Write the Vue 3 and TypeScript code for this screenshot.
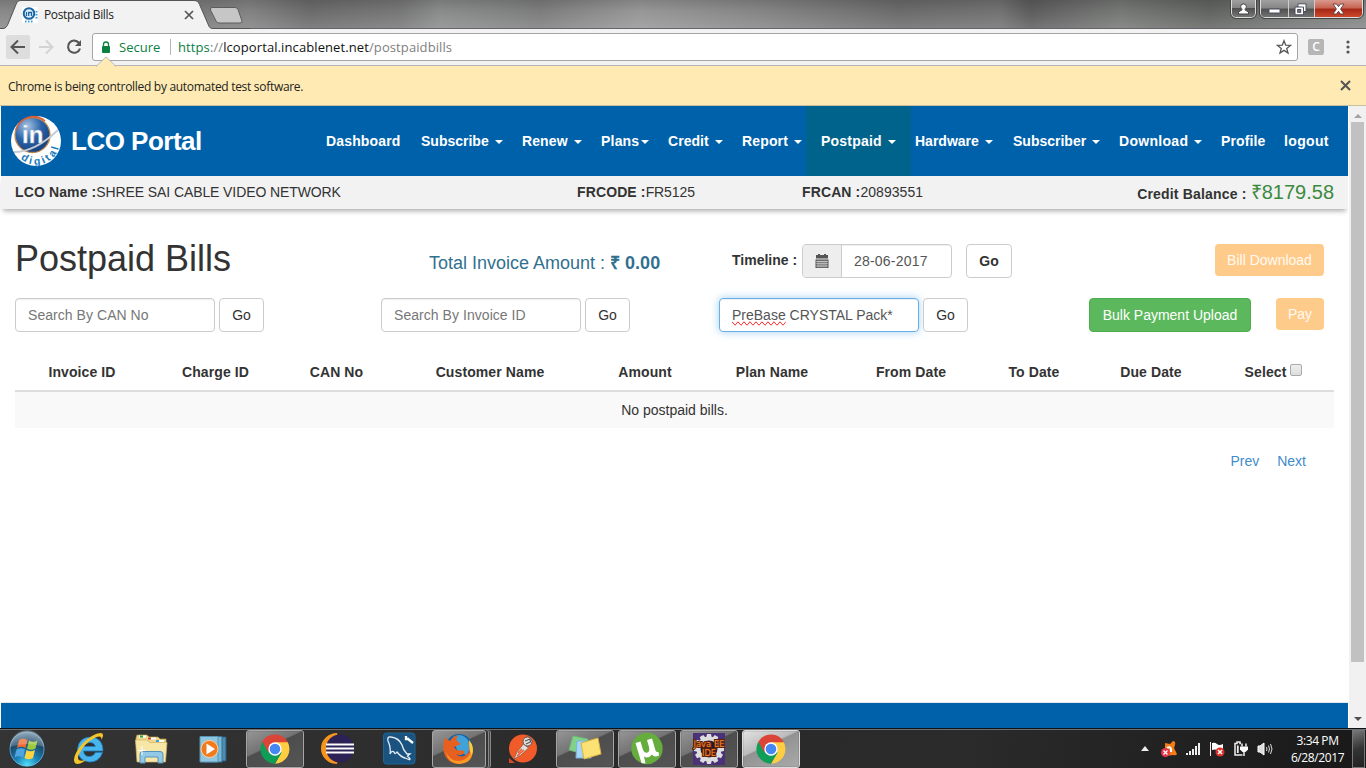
<script setup lang="ts">
interface NavItem {
  label: string
  width: number
  track: number
  caret?: boolean
  tight?: boolean
  active?: boolean
}

const navItems: NavItem[] = [
  { label: 'Dashboard', width: 95, track: 0.15 },
  { label: 'Subscribe', width: 101, track: 0, caret: true },
  { label: 'Renew', width: 79, track: 0.1, caret: true },
  { label: 'Plans', width: 67, track: 0.2, caret: true, tight: true },
  { label: 'Credit', width: 74, track: 0.05, caret: true },
  { label: 'Report', width: 64, track: 0.15, caret: true },
  { label: 'Postpaid', width: 109, track: 0.2, caret: true, active: true },
  { label: 'Hardware', width: 98, track: 0, caret: true },
  { label: 'Subscriber', width: 106, track: 0, caret: true },
  { label: 'Download', width: 102, track: 0.3, caret: true },
  { label: 'Profile', width: 63, track: 0.1 },
  { label: 'logout', width: 64, track: 0.35 },
]

const columns = [
  { label: 'Invoice ID', width: 134 },
  { label: 'Charge ID', width: 133 },
  { label: 'CAN No', width: 109 },
  { label: 'Customer Name', width: 198 },
  { label: 'Amount', width: 112 },
  { label: 'Plan Name', width: 142 },
  { label: 'From Date', width: 136 },
  { label: 'To Date', width: 110 },
  { label: 'Due Date', width: 124 },
]

const tasks = [
  { name: 'ie', state: '' },
  { name: 'explorer', state: '' },
  { name: 'media', state: '' },
  { name: 'chrome', state: 'open' },
  { name: 'eclipse', state: '' },
  { name: 'mysql', state: '' },
  { name: 'firefox', state: 'open stacked' },
  { name: 'postman', state: '' },
  { name: 'notes', state: 'open' },
  { name: 'utorrent', state: 'open' },
  { name: 'javaee', state: 'open' },
  { name: 'chrome', state: 'open current' },
]

const teeth = Array.from({ length: 12 }, (_, i) => i * 30)
</script>

<template>
  <div class="screen">
    <header class="titlebar">
      <svg class="tabs" width="250" height="29" viewBox="0 0 250 29">
        <path d="M0 28.5H3C6 28.5 7 26 8 24L16 4.500C17 2 18 .5 21 .5H194C197 .5 198.500 2 199.500 4.500L208 24C209 27 210 28.500 213 28.500H250V29H0Z" fill="#f2f2f2" />
        <path d="M0 28.500H3C6 28.500 7 26 8 24L16 4.500C17 2 18 .5 21 .5H194C197 .5 198.500 2 199.500 4.500L208 24C209 27 210 28.500 213 28.500H250" fill="none" stroke="#555" />
        <path d="M212 7.500H235Q237 7.500 238 9.500L242 21Q242.500 23 240 23H219Q217 23 216 21L210.500 10Q210 7.500 212 7.500Z" fill="#c6c6c6" stroke="#5c5c5c" />
      </svg>
      <div class="tab">
        <svg width="16" height="16" viewBox="0 0 16 16">
          <rect width="16" height="16" fill="#fff" />
          <circle cx="7" cy="6.500" r="5.300" fill="#dfeefa" stroke="#1c65a5" stroke-width="2" />
          <path d="M4.500 5V9M6.700 9V5.500H9.500V9" fill="none" stroke="#1c65a5" stroke-width="1.300" />
          <path d="M3 14.500H12M14.500 4V12" stroke="#3aa0dc" stroke-width="2" stroke-dasharray="1.500 1.500" />
        </svg>
        <span class="tab-title">Postpaid Bills</span>
        <svg class="tab-close" width="10" height="10" viewBox="0 0 10 10"><path d="M1 1L9 9M9 1L1 9" stroke="#555" stroke-width="1.700" /></svg>
      </div>
      <div class="window-controls">
        <div class="ctl profile">
          <svg width="11" height="12" viewBox="0 0 11 12"><path d="M.5 11V9L3 7.500L4.500 6.500H6.500L8 7.500L10.500 9V11Z" fill="#fff" stroke="#444" /><circle cx="5.500" cy="3.800" r="2.900" fill="#fff" stroke="#444" /><path d="M4.500 6H6.500V8H4.500Z" fill="#fff" /></svg>
        </div>
        <div class="ctl-group">
          <div class="ctl min"><svg width="13" height="6" viewBox="0 0 13 6"><rect x="1" y="1" width="11" height="4" rx=".5" fill="#fff" stroke="#4b4e60" /></svg></div>
          <div class="ctl max"><svg width="13" height="13" viewBox="0 0 13 13"><path d="M4 .8H12V8.500H9.500V11.800H1V4H4Z" fill="#fff" stroke="#4b4e60" /><rect x="3.700" y="6.500" width="3" height="2.800" fill="#777" stroke="#4b4e60" /><path d="M4 4H9.500V8.500" fill="none" stroke="#4b4e60" /></svg></div>
          <div class="ctl close"><svg width="13" height="12" viewBox="0 0 13 12"><path d="M1 1H4.500L6.500 3.700L8.500 1H12L8.600 6L12 11H8.500L6.500 8.300L4.500 11H1L4.400 6Z" fill="#fff" stroke="#5a3c40" stroke-width=".9" /></svg></div>
        </div>
      </div>
    </header>

    <div class="toolbar">
      <div class="tool back"><svg width="16" height="16" viewBox="0 0 16 16"><path d="M15 8H2M8 1.500L1.500 8L8 14.500" fill="none" stroke="#555" stroke-width="2" /></svg></div>
      <div class="tool fwd"><svg width="16" height="16" viewBox="0 0 16 16"><path d="M1 8H14M8 1.500L14.500 8L8 14.500" fill="none" stroke="#d3d3d3" stroke-width="2" /></svg></div>
      <div class="tool reload"><svg width="16" height="16" viewBox="0 0 16 16"><path d="M13.200 4.200A6.100 6.100 0 1 0 14 9.500" fill="none" stroke="#555" stroke-width="2.100" /><path d="M15 1V7H9Z" fill="#555" /></svg></div>
      <div class="address">
        <svg class="lock" width="10" height="12" viewBox="0 0 10 12"><rect x="1" y="5" width="8" height="7" rx="1" fill="#0b8043" /><path d="M2.500 5.500V3.500A2.500 2.500 0 0 1 7.500 3.500V5.500" fill="none" stroke="#0b8043" stroke-width="1.300" /></svg>
        <span class="secure">Secure</span>
        <span class="sep"></span>
        <span class="url"><span class="scheme">https</span><span class="dim">://</span>lcoportal.incablenet.net<span class="dim">/postpaidbills</span></span>
        <svg class="star" width="16" height="16" viewBox="0 0 16 16"><path d="M8 1.700L9.700 6.200L14.500 6.400L10.700 9.400L12 14L8 11.400L4 14L5.300 9.400L1.500 6.400L6.300 6.200Z" fill="none" stroke="#555" stroke-width="1.300" /></svg>
      </div>
      <div class="ext">C</div>
      <svg class="menu" width="4" height="14" viewBox="0 0 4 14"><circle cx="2" cy="2" r="1.600" fill="#555" /><circle cx="2" cy="7" r="1.600" fill="#555" /><circle cx="2" cy="12" r="1.600" fill="#555" /></svg>
    </div>

    <div class="infobar">
      <svg class="pointer" width="20" height="11" viewBox="0 0 20 11"><path d="M0 11L10 1L20 11Z" fill="#ffeab3" /><path d="M0 10.500L10 .8L20 10.500" fill="none" stroke="#b8b8b8" /></svg>
      <span class="info-text">Chrome is being controlled by automated test software.</span>
      <svg width="11" height="11" viewBox="0 0 11 11"><path d="M1 1L10 10M10 1L1 10" stroke="#555" stroke-width="2" /></svg>
    </div>

    <div class="viewport">
      <main class="page">
        <nav class="navbar">
          <svg class="logo" width="52" height="52" viewBox="0 0 52 52">
            <defs>
              <radialGradient id="globe" cx=".35" cy=".25" r=".8"><stop offset="0" stop-color="#a8c4e4" /><stop offset=".5" stop-color="#2c64aa" /><stop offset="1" stop-color="#123e7b" /></radialGradient>
              <path id="ring" d="M10 43A23.500 23.500 0 0 0 49.500 22" />
            </defs>
            <circle cx="26" cy="26" r="25" fill="#fff" />
            <circle cx="22.500" cy="20" r="17.500" fill="url(#globe)" stroke="#b9864d" stroke-width="1.300" />
            <path d="M6 15A18 18 0 0 1 35 6" fill="none" stroke="#d95b36" stroke-width="1.500" />
            <text x="12" y="28" class="logo-in">in</text>
            <path d="M4 37Q25 37 48 15" fill="none" stroke="#c4cbd3" stroke-width="1.800" />
            <text class="logo-digital"><textPath href="#ring" startOffset="1">digital</textPath></text>
          </svg>
          <span class="brand">LCO Portal</span>
          <ul class="nav">
            <li v-for="item in navItems" :key="item.label" :class="{ active: item.active, tight: item.tight }" :style="{ width: item.width + 'px' }">
              <div class="nav-link"><span :style="{ letterSpacing: item.track + 'px' }">{{ item.label }}</span><i v-if="item.caret" class="caret"></i></div>
            </li>
          </ul>
        </nav>

        <section class="account">
          <span class="acc-name"><b>LCO Name :</b>SHREE SAI CABLE VIDEO NETWORK</span>
          <span class="acc-code"><b>FRCODE :</b>FR5125</span>
          <span class="acc-can"><b>FRCAN :</b>20893551</span>
          <span class="acc-credit"><b>Credit Balance : </b><span class="balance">₹8179.58</span></span>
        </section>

        <div class="row heading-row">
          <h1>Postpaid Bills</h1>
          <div class="total">Total Invoice Amount : <b>₹ 0.00</b></div>
          <div class="timeline">
            <b>Timeline :</b>
            <div class="date-group">
              <span class="addon"><svg width="14" height="14" viewBox="0 0 14 14"><path d="M1 1H13V4.500H1ZM3 0H5V3H3ZM9 0H11V3H9Z" fill="#555" /><path d="M.5 5.500H13.500V14H.5Z" fill="#555" /><path d="M1 7.500H13M1 9.700H13M1 12H13M3 6.500V13.500M5 6.500V13.500M7 6.500V13.500M9 6.500V13.500M11 6.500V13.500" stroke="#eee" stroke-width=".6" /></svg></span>
              <span class="date">28-06-2017</span>
            </div>
            <button class="btn bold">Go</button>
          </div>
          <button class="btn warn">Bill Download</button>
        </div>

        <div class="row search-row">
          <div class="search can"><span class="field hint">Search By CAN No</span><button class="btn">Go</button></div>
          <div class="search inv"><span class="field hint">Search By Invoice ID</span><button class="btn">Go</button></div>
          <div class="search plan"><span class="field focused"><span class="misspelt">PreBase</span>&nbsp;CRYSTAL Pack*</span><button class="btn">Go</button></div>
          <button class="btn success">Bulk Payment Upload</button>
          <button class="btn warn pay">Pay</button>
        </div>

        <table>
          <colgroup><col v-for="c in columns" :key="c.label" :style="{ width: c.width + 'px' }" /><col /></colgroup>
          <thead>
            <tr>
              <th v-for="c in columns" :key="c.label">{{ c.label }}</th>
              <th><span class="select">Select<i class="check"></i></span></th>
            </tr>
          </thead>
          <tbody><tr><td colspan="10">No postpaid bills.</td></tr></tbody>
        </table>

        <div class="pager"><a>Prev</a><a>Next</a></div>
        <footer></footer>
      </main>
      <aside class="scrollbar">
        <svg width="8" height="4" viewBox="0 0 8 4"><path d="M0 4L4 0L8 4Z" fill="#a3a3a3" /></svg>
        <div class="thumb"></div>
        <svg class="down" width="8" height="4" viewBox="0 0 8 4"><path d="M0 0L4 4L8 0Z" fill="#505050" /></svg>
      </aside>
    </div>

    <div class="taskbar">
      <svg class="orb" width="40" height="38" viewBox="0 0 40 38">
        <defs>
          <radialGradient id="orb" cx=".5" cy=".95" r=".95"><stop offset="0" stop-color="#4ee4ff" /><stop offset=".35" stop-color="#1a7fb5" /><stop offset=".7" stop-color="#1d4564" /><stop offset="1" stop-color="#7d9fb5" /></radialGradient>
        </defs>
        <circle cx="20" cy="19" r="18" fill="url(#orb)" stroke="#20333f" />
        <circle cx="20" cy="19" r="17" fill="none" stroke="#8fb6cb" stroke-opacity=".7" />
        <path d="M12 10Q16 7 20.500 10L18.500 18Q14.500 15.500 10 18Z" fill="#ee6a33" />
        <path d="M22 10.500Q26 13 30.500 10.500L28.500 18.500Q24 21 20 18.500Z" fill="#9bc93c" />
        <path d="M9.500 19.500Q14 17 18 19.500L16 27.500Q12 25 7.500 27.500Z" fill="#4fa5e0" />
        <path d="M19.500 20Q23.500 22.500 28 20L26 28Q21.500 30.500 17.500 28Z" fill="#ffd23f" />
        <path d="M3 17A17 17 0 0 1 37 17Q20 11 3 17Z" fill="#fff" opacity=".22" />
      </svg>
      <div class="tasks">
        <div v-for="(t, i) in tasks" :key="i" class="task" :class="t.state">
          <svg v-if="t.name === 'ie'" width="34" height="34" viewBox="0 0 34 34">
            <path d="M30.500 20.500H23.500Q21.500 24.500 17.500 24.500Q12 24.500 11.500 19H31Q31 6.500 19.500 5Q7 5 5.500 17Q6 29 17.500 30Q27.500 30 30.500 20.500ZM11.800 14.500Q13 10.500 17.500 10.500Q22.500 10.500 23.300 14.500Z" fill="#49b5ed" stroke="#1d7fc0" stroke-width=".8" />
            <path d="M29.500 8Q33 1 28.500 1Q21 1.500 11 11Q-1 25 3 31Q6 34 14 28Q4 31 6.500 23Q12 11 23.500 5.500Q30 2.500 29.500 8Z" fill="#f5c62b" />
          </svg>
          <svg v-else-if="t.name === 'explorer'" width="34" height="34" viewBox="0 0 34 34">
            <path d="M2 6L3 3H13L15 5H24L26 7H32V12H2Z" fill="#f0d689" stroke="#b99b4b" stroke-width=".7" />
            <path d="M5 4.500H12M14 6.500H22M23 9H30" stroke="#fff" stroke-width="2" /><path d="M6 4.500H9" stroke="#1fa83a" stroke-width="2" /><path d="M14 6.500H17" stroke="#d2402c" stroke-width="2" /><path d="M22 9H25" stroke="#3ba0e0" stroke-width="2" />
            <path d="M1.500 8H13L16 10.500H33L31.500 30H3Z" fill="#f7e6a5" stroke="#cfb465" stroke-width=".7" />
            <path d="M6 31V22Q6 19.500 9 19.500H26Q29 19.500 29 22V31H24V25H11V31Z" fill="#91c9e7" stroke="#5693ba" />
            <path d="M8 14V23M4 18.500H12" stroke="#fff" stroke-width="1" />
          </svg>
          <svg v-else-if="t.name === 'media'" width="34" height="34" viewBox="0 0 34 34">
            <path d="M12 5H30V29H12Z" fill="#4c8eb3" stroke="#285b7c" /><path d="M8 4.500H26V30H8Z" fill="#7bb9d8" stroke="#376f91" /><path d="M4 4.500H22V30H4Z" fill="#91c6df" stroke="#5595b7" />
            <circle cx="13.500" cy="17" r="8.500" fill="#f07a1c" stroke="#ffd0a0" /><path d="M10.500 11.500L19 17L10.500 22.500Z" fill="#fff" />
          </svg>
          <svg v-else-if="t.name === 'chrome'" width="34" height="34" viewBox="0 0 34 34">
            <path d="M17 10H29.700A14.700 14.700 0 0 1 17 31.700L23.400 20.700Z" fill="#ffcd42" />
            <path d="M17 17L4.300 9.700A14.700 14.700 0 0 0 17 31.700L23.400 20.700Z" fill="#109d58" />
            <path d="M4.300 9.700L10.600 20.700L17 10.300H29.900A14.700 14.700 0 0 0 4.300 9.700Z" fill="#dc4437" />
            <circle cx="17" cy="17" r="6.700" fill="#fff" /><circle cx="17" cy="17" r="5.300" fill="#4587f3" />
          </svg>
          <svg v-else-if="t.name === 'eclipse'" class="eclipse" width="34" height="34" viewBox="0 0 34 34">
            <path d="M16 2A15 14.500 0 0 0 16 31A16 16 0 0 1 16 2Z" fill="#f7941e" stroke="#f7941e" stroke-width="2" />
            <circle cx="19" cy="16.500" r="14" fill="#2c2255" /><path d="M5 12.500H33M5 16.500H33M5 20.500H33" stroke="#fff" stroke-width="2" />
          </svg>
          <svg v-else-if="t.name === 'mysql'" width="34" height="34" viewBox="0 0 34 34">
            <rect x="1.500" y="1" width="31.500" height="31" rx="3" fill="#1b5380" stroke="#1d6796" />
            <path d="M8 22Q9 15 6 9Q5 4 9 5Q17 6 20 13Q21 18 25 22H28L25.500 24L28.500 27.500M8 22Q10 18 12 20Q13 23 15 20Q19 25 23 26L28 28" fill="none" stroke="#e7eef5" stroke-width="1.300" /><path d="M24 4V7H27M26 7L31 11" fill="none" stroke="#fff" stroke-width="2.300" />
          </svg>
          <svg v-else-if="t.name === 'firefox'" class="firefox" width="34" height="34" viewBox="0 0 34 34">
            <circle cx="18" cy="15.500" r="13.500" fill="#1763a5" /><path d="M12 5Q20 0 27 8Q31 17 25 23L16 18Z" fill="#3fa2d8" />
            <path d="M4 6L9 9Q11 5 17 3Q15 7 16 9L20 12L13 15Q16 20 21 18L24 20Q21 25 15 22Q21 28 28 20Q29 14 27 9Q34 15 31 23Q27 32 17 32Q6 31 3 21Q1 14 4 6Z" fill="#e8601f" />
            <path d="M5 20Q9 29 18 29Q29 28 31 15Q34 31 18 32Q7 31 5 20Z" fill="#f99a25" /><path d="M28 8Q34 15 31 23Q28 20 28 8Z" fill="#ffc93a" />
          </svg>
          <svg v-else-if="t.name === 'postman'" width="34" height="34" viewBox="0 0 34 34">
            <path d="M3 26V31H9Z" fill="#d84824" /><circle cx="17" cy="16.500" r="14" fill="#f15a29" />
            <path d="M17.500 12L22.500 16L15 23L8 27L11 20Z" fill="#e3dcd7" stroke="#7a5b4c" stroke-width=".7" /><circle cx="21.500" cy="9.500" r="4.500" fill="#ddd" stroke="#5d5350" /><path d="M19 9L24 7L24.500 10L20 12" fill="none" stroke="#5d5350" stroke-width="1.200" /><path d="M12 21L16 17M11 24L18 18" stroke="#f15a29" stroke-width="1.600" />
          </svg>
          <svg v-else-if="t.name === 'notes'" width="34" height="34" viewBox="0 0 34 34">
            <path d="M5 4L20 7L16 22L1 18Z" fill="#83d08a" stroke="#6eb875" /><path d="M9 9L24 9L23 26L8 26Z" fill="#a6d5f7" stroke="#79b6e1" /><path d="M13 11L30 6L33 22L16 27Z" fill="#fce175" stroke="#d9b33d" />
          </svg>
          <svg v-else-if="t.name === 'utorrent'" width="34" height="34" viewBox="0 0 34 34">
            <circle cx="17" cy="16.500" r="15.700" fill="#65ad3d" /><path d="M5.500 11L10.500 9.500L13 18Q14.500 21.500 17.500 20.500Q20 19.500 19 15L17 8L22 6.500L25.500 18.500Q26.300 20.500 28.500 20L29 23.500Q24 26 22 22.500Q18.500 27 14 24.500L15.500 31.500L11.500 31Z" fill="#fff" />
          </svg>
          <svg v-else width="34" height="34" viewBox="0 0 34 34">
            <rect x="1" y="1" width="32" height="32" fill="#4b3177" /><g transform="translate(17 17)"><path v-for="a in teeth" :key="a" d="M-2 -15H2L3 -10H-3Z" fill="#ddd" :transform="'rotate(' + a + ')'" /></g>
            <circle cx="17" cy="17" r="10.500" fill="#24173a" stroke="#ddd" stroke-width="4" /><text x="17" y="15" class="ee" textLength="31" lengthAdjust="spacingAndGlyphs">Java EE</text><text x="17" y="24" class="ee" textLength="14" lengthAdjust="spacingAndGlyphs">IDE</text>
          </svg>
        </div>
      </div>
      <div class="tray">
        <svg width="8" height="5" viewBox="0 0 8 5"><path d="M0 5L4 0L8 5Z" fill="#eee" /></svg>
        <svg width="16" height="16" viewBox="0 0 16 16"><path d="M4 2L9 3L12 0Q15 0 14 4L13 7L16 13Q15 15 12 14L4 15L1 12L4 7Z" fill="#f47b16" /><path d="M6 7Q9 5 10 8V11" fill="none" stroke="#fff" stroke-width="2" /><circle cx="4.500" cy="11.500" r="4.500" fill="#e6344a" /><path d="M2.500 9.500L6.500 13.500M6.500 9.500L2.500 13.500" stroke="#fff" stroke-width="1.200" /></svg>
        <svg width="15" height="12" viewBox="0 0 15 12"><path d="M1 10V12M4 8V12M7 6V12M10 3V12M13 0V12" stroke="#eee" stroke-width="2" /></svg>
        <svg width="16" height="16" viewBox="0 0 16 16"><path d="M1.500 1V15" stroke="#eee" /><path d="M3 2Q6 1 8 3T14 3V9Q10 10 8 9T3 9Z" fill="#fff" /><circle cx="11" cy="11" r="4.500" fill="#db3028" /><path d="M9 9L13 13M13 9L9 13" stroke="#fff" stroke-width="1.500" /></svg>
        <svg width="15" height="15" viewBox="0 0 15 15"><path d="M7 2.500H6V1H3V2.500H1V14H8.500" fill="none" stroke="#eee" stroke-width="1.500" /><path d="M3.800 4.500V12" stroke="#eee" stroke-width="1.800" /><path d="M6 5.500H14V8.500L11.500 11H8.500L6 8.500Z" fill="#fff" /><path d="M8 5.500V2.500M12 5.500V2.500M10 10V15" stroke="#fff" stroke-width="1.400" /></svg>
        <svg width="16" height="14" viewBox="0 0 16 14"><path d="M1 4H3L7 1V13L3 10H1Z" fill="#ddd" stroke="#fff" /><path d="M9.500 5Q10.500 7 9.500 9M11.500 3.500Q13.500 7 11.500 10.500M13.500 2Q16.500 7 13.500 12" fill="none" stroke="#ddd" /></svg>
      </div>
      <div class="clock"><span>3:34 PM</span><span>6/28/2017</span></div>
      <div class="desktop"></div>
    </div>
  </div>
</template>

<style>
html, body { margin: 0; overflow: hidden; }
</style>

<style scoped>
* { box-sizing: border-box; }
svg { display: block; flex: none; }
.screen { width: 1366px; height: 768px; display: flex; flex-direction: column; overflow: hidden; font: 14px/20px "Liberation Sans", Arial, sans-serif; color: #333; background: #fff; }
.titlebar { height: 29px; flex: none; display: grid; background: linear-gradient(180deg, #0002, transparent 40%, #fff2), linear-gradient(90deg, #898989 0, #777 180px, #828282 250px, #6b6b6b 310px, #777 400px, #8a8c8c 440px, #7d7d7d 540px, #979797 640px, #858585 760px, #6b6b6b 900px, #727272 1000px, #5d5d5d 1030px, #767876 1120px, #626462 1210px, #858787 1366px); border-bottom: 1px solid #68636a; }
.titlebar > * { grid-area: 1 / 1; }
.tab { display: flex; align-items: center; align-self: start; width: 194px; height: 30px; padding-left: 22px; font: 12px/16px "Open Sans", sans-serif; color: #222; }
.tab-title { margin-left: 6px; letter-spacing: -.35px; white-space: nowrap; }
.tab-close { margin-left: auto; }
.window-controls { justify-self: end; display: flex; gap: 4px; padding-right: 3px; height: 19px; }
.ctl { display: flex; align-items: center; justify-content: center; height: 18px; background: linear-gradient(#a0a0a0, #858585 45%, #505050 50%, #767676); }
.ctl.profile { width: 25px; border: 1px solid #ddd; border-top: 0; border-radius: 0 0 5px 5px; outline: 1px solid #444; }
.ctl-group { display: flex; border: 1px solid #ddd; border-top: 0; border-radius: 0 0 5px 5px; outline: 1px solid #444; overflow: hidden; height: 18px; }
.min { width: 28px; padding-top: 4px; border-right: 1px solid #ccc; }
.max { width: 26px; border-right: 1px solid #ccc; padding-right: 2px; }
.close { width: 47px; background: linear-gradient(#d99a8e, #c76350 45%, #a42717 50%, #d24c2d); }
.toolbar { height: 37px; flex: none; display: flex; align-items: center; background: #f2f2f2; border-bottom: 1px solid #b7b5b8; padding-left: 6px; }
.tool { display: flex; align-items: center; justify-content: center; width: 24px; height: 24px; }
.back { background: #ddd; border-radius: 2px; }
.fwd { margin-left: 4px; }
.reload { margin-left: 4px; }
.address { display: flex; align-items: center; width: 1206px; height: 28px; margin-left: 6px; padding: 0 5px 0 8px; border: 1px solid #a5a5a5; border-radius: 3px; background: #fff; font: 14px/20px "Open Sans", sans-serif; white-space: nowrap; }
.secure { color: #0b8043; margin-left: 8px; width: 42px; font-size: 13px; letter-spacing: 0; }
.sep { width: 1px; height: 16px; background: #b5b5b5; margin: 0 7px 0 9px; }
.url { font-size: 13px; letter-spacing: .1px; color: #111; }
.scheme { color: #0b8043; }
.dim { color: #808080; }
.star { margin-left: auto; }
.ext { width: 16px; height: 16px; margin-left: 10px; border-radius: 2px; background: #b6b6b6; color: #fff; font: 600 12px/16px "Open Sans", sans-serif; text-align: center; }
.menu { margin-left: 22px; }
.infobar { position: relative; height: 40px; flex: none; display: flex; align-items: center; justify-content: space-between; background: #ffeab3; border-bottom: 1px solid #c7bda0; padding: 0 15px 0 8px; font: 12px/16px "Open Sans", sans-serif; color: #222; }
.pointer { position: absolute; left: 96px; top: -10px; }
.info-text { letter-spacing: -.3px; padding-top: 2px; }
.viewport { height: 622px; flex: none; display: flex; padding-left: 1px; }
.page { width: 1347px; display: flex; flex-direction: column; }
.navbar { height: 70px; flex: none; display: flex; align-items: center; background: #0061ab; padding-left: 9px; color: #fff; }
.logo-in { font: bold 24px "Liberation Sans", sans-serif; fill: #fff; stroke: #a9b9ce; stroke-width: .5; }
.logo-digital { font: bold 10.5px "Liberation Sans", sans-serif; fill: #1678bd; letter-spacing: 2.7px; }
.brand { margin-left: 9px; width: 255px; font-weight: bold; font-size: 26px; line-height: 36px; letter-spacing: -.5px; }
.nav { display: flex; margin: 0; padding: 0; list-style: none; height: 70px; font-weight: bold; }
.nav-link { display: flex; align-items: center; height: 70px; gap: 6px; }
.tight .nav-link { gap: 2px; }
.active .nav-link { width: 105px; padding-left: 15px; background: #00638b; }
.caret { border: 4px solid transparent; border-top-color: #fff; border-bottom: 0; margin-top: 2px; }
.account { display: flex; align-items: center; height: 33px; flex: none; background: #f2f2f2; padding: 0 14px; box-shadow: 0 4px 5px -2px #0005; white-space: nowrap; letter-spacing: -.1px; }
.account b { letter-spacing: .12px; }
.acc-name { width: 562px; padding-bottom: 2px; }
.acc-code { width: 225px; padding-bottom: 2px; }
.acc-can { letter-spacing: .05px; padding-bottom: 2px; }
.acc-credit { margin-left: auto; }
.acc-credit b { letter-spacing: .18px; }
.balance { font-size: 20px; letter-spacing: 0; color: #3c8a40; }
.row { display: flex; height: 34px; flex: none; padding-left: 14px; }
.heading-row { margin-top: 35px; }
h1 { margin: -5px 0 0; width: 414px; font-weight: 400; font-size: 36px; line-height: 40px; white-space: nowrap; }
.total { width: 303px; color: #31708f; font-size: 18px; line-height: 38px; white-space: nowrap; }
.timeline { display: flex; width: 483px; line-height: 32px; }
.timeline > b { width: 70px; }
.date-group { display: flex; width: 150px; height: 34px; border: 1px solid #ccc; border-radius: 4px; margin-right: 14px; color: #555; overflow: hidden; box-shadow: inset 0 1px 1px #0001; }
.addon { display: flex; align-items: center; justify-content: center; width: 39px; background: #eee; border-right: 1px solid #ccc; }
.date { padding-left: 12px; letter-spacing: .2px; }
.btn { height: 34px; padding: 0 12px; border: 1px solid #ccc; border-radius: 4px; background: #fff; color: #333; font: 14px/20px "Liberation Sans", Arial, sans-serif; white-space: nowrap; }
.btn.bold { font-weight: bold; width: 46px; }
.btn.warn { height: 32px; width: 109px; padding: 0; border: 0; background: #ffcb8a; color: #fffaf2; }
.search-row { margin-top: 20px; }
.search { display: flex; gap: 4px; }
.search .btn { width: 45px; padding: 0; }
.search.can { width: 366px; }
.search.inv { width: 338px; }
.search.plan { width: 370px; }
.field { width: 200px; height: 34px; padding: 6px 12px; border: 1px solid #ccc; border-radius: 4px; color: #555; box-shadow: inset 0 1px 1px #0001; white-space: nowrap; }
.hint { color: #777; letter-spacing: .05px; }
.focused { border-color: #66afe9; box-shadow: inset 0 1px 1px #0001, 0 0 8px #66afe999; }
.misspelt { text-decoration: underline wavy #f33 1px; text-decoration-line: spelling-error; }
.btn.success { width: 162px; background: #5cb85c; border-color: #4cae4c; color: #fff; padding: 0; }
.btn.pay { width: 48px; margin-left: 25px; }
table { width: 1319px; flex: none; margin: 22px 0 0 14px; table-layout: fixed; border-collapse: separate; border-spacing: 0; }
th { height: 38px; padding: 0; border-bottom: 2px solid #ddd; letter-spacing: .1px; text-align: center; }
td { height: 36px; padding: 0; background: #f9f9f9; text-align: center; }
.select { display: inline-flex; align-items: center; gap: 4px; }
.check { width: 12px; height: 12px; border: 1px solid #aaa; border-radius: 2px; background: linear-gradient(#eee, #ddd); margin-top: -4px; }
.pager { display: flex; justify-content: flex-end; gap: 18px; padding: 23px 42px 0 0; color: #428bca; }
footer { height: 26px; margin-top: auto; background: #0061ab; border-top: 1px solid #e7e7e7; }
.scrollbar { width: 18px; margin-left: auto; display: flex; flex-direction: column; align-items: center; background: #f1f1f1; padding: 8px 0 7px; border-left: 1px solid #fff; }
.thumb { width: 13px; height: 540px; margin-top: 4px; background: #c1c1c1; }
.down { margin-top: auto; }
.taskbar { height: 40px; flex: none; display: flex; align-items: center; background: linear-gradient(100deg, #343434, #292929 50%, #2b2b2b 70%, #222 85%, #191919); box-shadow: inset 0 1px #111, inset 0 2px #687078; }
.orb { margin-left: 7px; margin-top: 1px; }
.tasks { display: flex; gap: 4px; margin-left: 13px; }
.task { display: flex; align-items: center; justify-content: center; width: 58px; height: 38px; border: 1px solid transparent; border-radius: 3px; margin-top: 1px; }
.open { border-color: #a6a6a6; background: linear-gradient(155deg, #969696, #747474 40%, #4d4d4d 43%, #555); box-shadow: inset 0 0 1px #222; }
.current { background: linear-gradient(155deg, #e2e2e2, #bcbcbc 40%, #929292 43%, #aaa); border-color: #ddd; }
.stacked { width: 54px; margin-right: 4px; box-shadow: 2px 0 #333, 3px 0 #888, 4px 0 #444, 5px 0 #888; }
.firefox { margin-right: 3px; }
.eclipse { margin-left: 2px; }
.ee { font: 9px "DejaVu Sans", sans-serif; fill: #ff8a22; stroke: #5c220c; stroke-width: 2; paint-order: stroke; text-anchor: middle; }
.tray { display: flex; align-items: center; margin-left: auto; gap: 8.4px; padding-top: 1px; }
.tray svg:first-child { margin-right: 4px; }
.clock { display: flex; flex-direction: column; align-items: center; width: 84px; margin-left: 3px; padding-left: 3px; margin-right: -8px; padding-right: 4px; padding-top: 1px; color: #fff; font: 12px/17px "Open Sans", sans-serif; letter-spacing: -.4px; }
.desktop { width: 13px; height: 38px; border: 1px solid #777; background: linear-gradient(160deg, #777, #333 50%, #222); margin-right: 1px; margin-top: 1px; }
</style>
